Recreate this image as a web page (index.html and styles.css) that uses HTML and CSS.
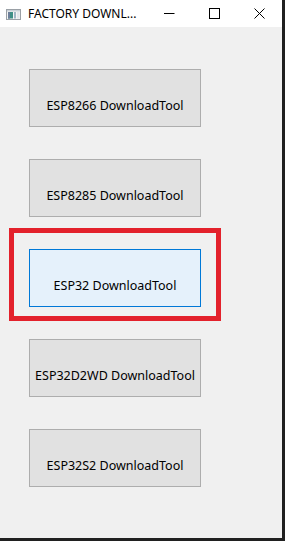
FILE: index.html
```html
<!DOCTYPE html>
<html lang="en">
<head>
    <meta charset="UTF-8">
    <meta name="viewport" content="width=device-width, initial-scale=1.0">
    <title>FACTORY DOWNLOAD TOOL</title>
    <link rel="stylesheet" href="styles.css">
</head>
<body>
    <div class="window">
        <div class="titlebar">
            <svg class="app-icon" width="15" height="11" viewBox="0 0 15 11">
                <rect x="0.5" y="0.5" width="14" height="10" fill="#f4f4f4" stroke="#9aa0a6"/>
                <rect x="1" y="1" width="13" height="1.5" fill="#c8d0d6"/>
                <rect x="2" y="3" width="5" height="6.5" fill="#3f8f86"/>
                <rect x="2" y="3" width="2" height="6.5" fill="#6c7f9a"/>
                <rect x="8" y="3" width="2" height="6.5" fill="#9fb6c4"/>
                <rect x="11" y="3" width="2.5" height="6.5" fill="#e2e6ea"/>
            </svg>
            <span class="title">FACTORY DOWNL...</span>
            <div class="controls">
                <span class="ctl">
                    <svg width="11" height="11" viewBox="0 0 11 11"><path d="M0 5.5H10.5" stroke="#000" stroke-width="1"/></svg>
                </span>
                <span class="ctl">
                    <svg width="11" height="11" viewBox="0 0 11 11"><rect x="0.5" y="0.5" width="10" height="10" fill="none" stroke="#000"/></svg>
                </span>
                <span class="ctl">
                    <svg width="11" height="11" viewBox="0 0 11 11"><path d="M0.5 0.5L10.5 10.5M10.5 0.5L0.5 10.5" stroke="#000" stroke-width="1"/></svg>
                </span>
            </div>
        </div>

        <div class="content">
            <button class="tool-btn">ESP8266 DownloadTool</button>
            <button class="tool-btn">ESP8285 DownloadTool</button>
            <button class="tool-btn selected">ESP32 DownloadTool</button>
            <button class="tool-btn">ESP32D2WD DownloadTool</button>
            <button class="tool-btn">ESP32S2 DownloadTool</button>
        </div>
    </div>
</body>
</html>
```

FILE: styles.css
```css
body {
    margin: 0;
    width: 285px;
    height: 541px;
    background-color: #202020;
    font-family: "Noto Sans", "Open Sans", sans-serif;
    overflow: hidden;
}
.window {
    width: 282px;
    height: 538px;
    display: flex;
    flex-direction: column;
    background-color: #f0f0f0;
}
.titlebar {
    height: 27px;
    background-color: #fff;
    display: flex;
    align-items: center;
    padding-left: 6px;
}
.app-icon {
    margin-top: 1px;
}
.title {
    margin-left: 7px;
    font-size: 12px;
    color: #000;
    white-space: nowrap;
}
.controls {
    display: flex;
    margin-left: auto;
}
.ctl {
    width: 45px;
    height: 27px;
    display: flex;
    align-items: center;
    justify-content: center;
}
.content {
    flex: 1;
    display: flex;
    flex-direction: column;
    gap: 32px;
    padding: 42px 0 0 29px;
}
.tool-btn {
    position: relative;
    width: 172px;
    height: 58px;
    display: flex;
    align-items: flex-end;
    justify-content: center;
    padding: 0 0 12px;
    background-color: #e1e1e1;
    border: 1px solid #adadad;
    border-radius: 0;
    font-family: inherit;
    font-size: 12.5px;
    color: #000;
}
.tool-btn.selected {
    background-color: #e5f1fb;
    border-color: #0078d7;
}
/* red annotation box drawn over the screenshot */
.tool-btn.selected::after {
    content: "";
    position: absolute;
    top: -22px;
    left: -21px;
    right: -21px;
    bottom: -15px;
    border: 5px solid #e3212b;
}
```
